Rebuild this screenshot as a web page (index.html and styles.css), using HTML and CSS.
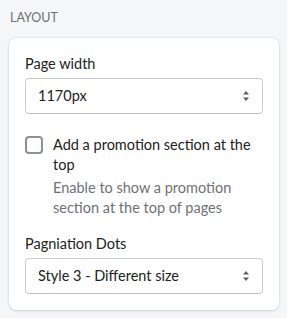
FILE: index.html
```html
<!DOCTYPE html>
<html>
<head>
    <title>Layout Settings</title>
    <link rel="stylesheet" href="styles.css">
</head>
<body>
    <div class="section-heading">Layout</div>

    <div class="card">
        <div class="field">
            <label class="field-label" for="pageWidth">Page width</label>
            <div class="select">
                <select id="pageWidth">
                    <option>1170px</option>
                </select>
                <span class="select-value">1170px</span>
                <svg class="select-arrows" viewBox="0 0 20 20" width="20" height="20">
                    <path d="M7 8.5l3-3.5 3 3.5z M7 11.5l3 3.5 3-3.5z" fill="#5c5f62"/>
                </svg>
            </div>
        </div>

        <div class="field checkbox-field">
            <label class="checkbox-row">
                <input type="checkbox" id="promoToggle">
                <span class="checkbox-box"></span>
                <span class="checkbox-label">Add a promotion section at the top</span>
            </label>
            <div class="help-text">Enable to show a promotion section at the top of pages</div>
        </div>

        <div class="field">
            <label class="field-label" for="dotsStyle">Pagniation Dots</label>
            <div class="select">
                <select id="dotsStyle">
                    <option>Style 3 - Different size</option>
                </select>
                <span class="select-value">Style 3 - Different size</span>
                <svg class="select-arrows" viewBox="0 0 20 20" width="20" height="20">
                    <path d="M7 8.5l3-3.5 3 3.5z M7 11.5l3 3.5 3-3.5z" fill="#5c5f62"/>
                </svg>
            </div>
        </div>
    </div>
</body>
</html>
```

FILE: styles.css
```css
:root {
    --bg-color: #f4f6f8;
    --text-color: #202223;
    --subdued-color: #6d7175;
    --border-color: #c9cccf;
    --border-radius: 8px;
}

body {
    font-family: 'Lato', 'Open Sans', sans-serif;
    font-size: 14.5px;
    line-height: 20px;
    background: var(--bg-color);
    color: var(--text-color);
    margin: 0;
}

.section-heading {
    font-size: 12.5px;
    line-height: 16px;
    text-transform: uppercase;
    color: var(--subdued-color);
    padding: 10px 10px 12px;
}

.card {
    background: #ffffff;
    border-radius: var(--border-radius);
    margin: 0 8px 8px 9px;
    padding: 16px;
    box-shadow: 0 0 0 1px rgba(63, 63, 68, 0.05), 0 1px 3px rgba(63, 63, 68, 0.15);
}

.field + .field {
    margin-top: 16px;
}

.field-label {
    display: block;
    margin-bottom: 4px;
}

.select {
    position: relative;
    display: flex;
    align-items: center;
    height: 36px;
    box-sizing: border-box;
    border: 1px solid var(--border-color);
    border-bottom-color: #babfc3;
    border-radius: 4px;
    padding: 0 12px;
}

.select select {
    position: absolute;
    inset: 0;
    opacity: 0;
    width: 100%;
}

.select-value {
    flex: 1;
}

.select-arrows {
    margin-right: -6px;
}

.checkbox-field {
    margin-top: 21px !important;
}

.checkbox-row {
    display: flex;
    align-items: flex-start;
    gap: 10px;
}

.checkbox-row input {
    display: none;
}

.checkbox-box {
    flex: none;
    width: 18px;
    height: 18px;
    box-sizing: border-box;
    border: 2px solid #8c9196;
    border-radius: 4px;
    margin-top: 1px;
}

.help-text {
    color: var(--subdued-color);
    padding-left: 28px;
    margin-top: 3px;
}
```
